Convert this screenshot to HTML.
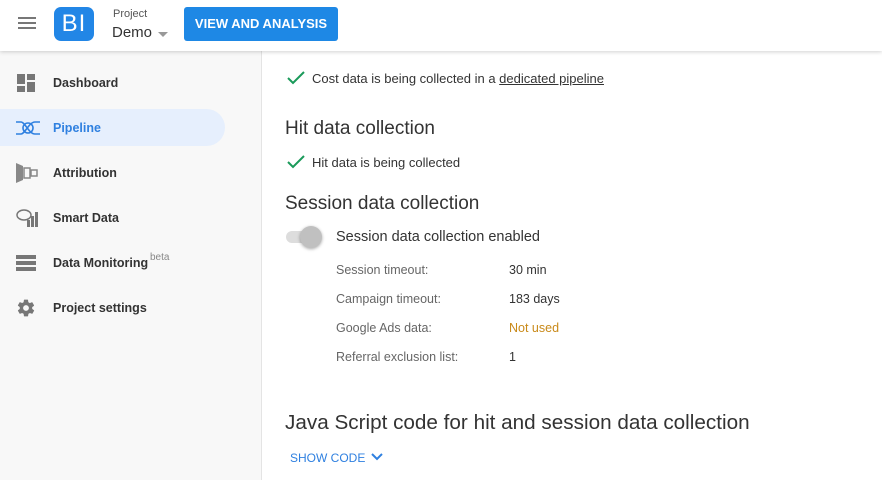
<!DOCTYPE html>
<html><head><style>
*{margin:0;padding:0;box-sizing:border-box}
body{width:882px;height:480px;overflow:hidden;background:#fff;font-family:"Liberation Sans",Arial,sans-serif;position:relative;color:#333}
.hdr{position:absolute;left:0;top:0;width:882px;height:51px;background:#fff;box-shadow:0 1px 4px rgba(0,0,0,.18);z-index:2}
.side{position:absolute;left:0;top:51px;width:262px;height:429px;background:#f8f8f8;border-right:1px solid #e4e4e4}
.item{position:absolute;left:0;height:37px;width:225px;font-size:12.5px;font-weight:bold;color:#333;line-height:38px;padding-left:53px}
.item.act{background:#e6effd;border-radius:0 19px 19px 0;color:#2f80e0}
.ico{position:absolute;left:16px;top:9px}
.t{position:absolute;font-size:13px;color:#333}
.h{position:absolute;font-size:19px;color:#333;left:285px}
.lbl{position:absolute;left:336px;font-size:12.5px;color:#666}
.val{position:absolute;left:509px;font-size:12.5px;color:#333}
</style></head><body>
<div class="hdr">
 <div style="position:absolute;left:18px;top:17px;width:18px;height:2px;background:#777;box-shadow:0 5px 0 #777,0 10px 0 #777"></div>
 <div style="position:absolute;left:54px;top:7px;width:40px;height:34px;background:#2286e6;border-radius:7px;color:#fff;font-size:24px;line-height:34px;text-align:center;letter-spacing:1px">BI</div>
 <div style="position:absolute;left:113px;top:8px;font-size:11px;color:#555">Project</div>
 <div style="position:absolute;left:112px;top:24px;font-size:15px;color:#333">Demo</div>
 <div style="position:absolute;left:158px;top:32px;border:5px solid transparent;border-top-color:#999;border-bottom:none"></div>
 <div style="position:absolute;left:184px;top:7px;width:154px;height:34px;background:#1e88e5;border-radius:3px;color:#fff;font-size:13px;font-weight:bold;line-height:34px;text-align:center">VIEW AND ANALYSIS</div>
</div>
<div class="side">
 <div class="item" style="top:13px"><svg class="ico" width="20" height="20"><rect x="1" y="1" width="8" height="10" fill="#777"/><rect x="11" y="1" width="8" height="6" fill="#777"/><rect x="1" y="13" width="8" height="6" fill="#777"/><rect x="11" y="9" width="8" height="10" fill="#777"/></svg>Dashboard</div>
 <div class="item act" style="top:58px"><svg class="ico" width="24" height="20" fill="none" stroke="#2f80e0" stroke-width="1.6"><path d="M0 4h5M0 16h5M19 4h5M19 16h5M5 4c4 0 8 12 14 12M5 16c4 0 8-12 14-12"/><circle cx="12" cy="10" r="5"/></svg>Pipeline</div>
 <div class="item" style="top:103px"><svg class="ico" width="22" height="20"><path d="M0 0l7 3v14l-7 3z" fill="#888"/><rect x="8" y="5" width="6" height="10" fill="none" stroke="#888" stroke-width="1.5"/><rect x="15" y="7" width="6" height="6" fill="none" stroke="#888" stroke-width="1.5"/></svg>Attribution</div>
 <div class="item" style="top:148px"><svg class="ico" width="22" height="20"><ellipse cx="8" cy="7" rx="7" ry="5" fill="none" stroke="#777" stroke-width="1.5"/><rect x="11" y="12" width="3" height="7" fill="#777"/><rect x="15" y="8" width="3" height="11" fill="#777"/><rect x="19" y="4" width="3" height="15" fill="#777"/></svg>Smart Data</div>
 <div class="item" style="top:193px"><svg class="ico" width="20" height="20"><rect x="0" y="2" width="20" height="4" fill="#777"/><rect x="0" y="8" width="20" height="4" fill="#777"/><rect x="0" y="14" width="20" height="4" fill="#777"/></svg>Data Monitoring<span style="position:absolute;left:150px;top:-5px;font-weight:normal;font-size:10px;color:#888">beta</span></div>
 <div class="item" style="top:238px"><svg class="ico" width="20" height="20" viewBox="0 0 24 24"><path fill="#777" d="M19.4 13c.04-.3.06-.6.06-1s-.02-.7-.06-1l2.1-1.6c.2-.15.24-.42.12-.64l-2-3.46c-.12-.22-.39-.3-.61-.22l-2.5 1c-.52-.4-1.08-.73-1.7-.98l-.37-2.65A.49.49 0 0014 2h-4c-.25 0-.46.18-.5.42l-.37 2.65c-.62.25-1.18.59-1.7.98l-2.5-1c-.22-.08-.49 0-.61.22l-2 3.46c-.13.22-.07.49.12.64L4.57 11c-.04.32-.07.65-.07 1s.03.68.07 1l-2.1 1.65c-.2.15-.25.42-.13.64l2 3.46c.12.22.39.3.61.22l2.5-1c.52.4 1.08.73 1.7.98l.37 2.65c.04.24.25.42.5.42h4c.25 0 .46-.18.5-.42l.37-2.650c.62-.25 1.18-.59 1.7-.98l2.5 1c.22.08.49 0 .61-.22l2-3.46c.12-.22.07-.49-.12-.64zM12 15.5A3.5 3.5 0 1112 8.5a3.5 3.5 0 010 7z"/></svg>Project settings</div>
</div>
<svg style="position:absolute;left:287px;top:70px" width="18" height="16" fill="none" stroke="#1a9a5a" stroke-width="2"><path d="M1 8l5 5L17 2"/></svg>
<div class="t" style="left:312px;top:71px">Cost data is being collected in a <u>dedicated pipeline</u></div>
<div class="h" style="top:118px">Hit data collection</div>
<svg style="position:absolute;left:287px;top:154px" width="18" height="16" fill="none" stroke="#1a9a5a" stroke-width="2"><path d="M1 8l5 5L17 2"/></svg>
<div class="t" style="left:312px;top:155px">Hit data is being collected</div>
<div class="h" style="top:193px">Session data collection</div>
<div style="position:absolute;left:286px;top:231px;width:32px;height:12px;border-radius:6px;background:#ddd"></div>
<div style="position:absolute;left:300px;top:226px;width:22px;height:22px;border-radius:50%;background:#c0c0c0;box-shadow:0 1px 3px rgba(0,0,0,.35)"></div>
<div class="t" style="left:336px;top:229px;font-size:14.5px">Session data collection enabled</div>
<div class="lbl" style="top:263px">Session timeout:</div><div class="val" style="top:263px">30 min</div>
<div class="lbl" style="top:292px">Campaign timeout:</div><div class="val" style="top:292px">183 days</div>
<div class="lbl" style="top:321px">Google Ads data:</div><div class="val" style="top:321px;color:#c98a1a">Not used</div>
<div class="lbl" style="top:350px">Referral exclusion list:</div><div class="val" style="top:350px">1</div>
<div class="h" style="top:411px;font-size:20.7px">Java Script code for hit and session data collection</div>
<div style="position:absolute;left:290px;top:451px;font-size:12px;color:#2f80e0">SHOW CODE</div>
<svg style="position:absolute;left:371px;top:453px" width="12" height="9" fill="none" stroke="#2f80e0" stroke-width="2"><path d="M1 1l5 5 5-5"/></svg>
</body></html>
